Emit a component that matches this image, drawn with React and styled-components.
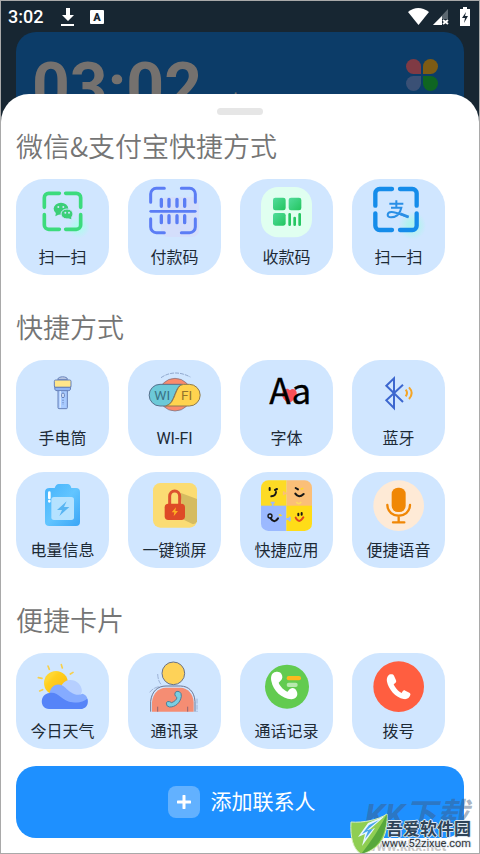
import styled, { createGlobalStyle } from "styled-components";

const GlobalStyle = createGlobalStyle`
  * {
    box-sizing: border-box;
  }
  body {
    margin: 0;
    font-family: Roboto, "Noto Sans CJK SC", sans-serif;
  }
  button {
    font-family: inherit;
  }
`;

const Page = styled.div`
  position: relative;
  display: flex;
  flex-direction: column;
  min-height: 100vh;
  overflow: hidden;
  border: 1px solid #a9a9a9;
  background: #172632;
`;

const StatusBar = styled.header`
  display: flex;
  align-items: center;
  justify-content: space-between;
  height: 31px;
  padding: 0 8px 0 7px;
  color: #fff;
`;

const StatusGroup = styled.div`
  display: flex;
  align-items: center;
  gap: ${(props) => props.$gap}px;
`;

const StatusTime = styled.span`
  font-size: 18px;
  line-height: 20px;
  font-weight: 500;
  margin-right: 3px;
`;

const ClockCard = styled.div`
  display: flex;
  align-items: flex-start;
  justify-content: space-between;
  height: 92px;
  margin: 0 15px;
  padding: 20px 26px 0 16px;
  border-radius: 20px;
  overflow: hidden;
  background: #0c3c68;
  color: #75716e;
`;

const ClockTime = styled.div`
  display: flex;
  align-items: baseline;
  gap: 8px;
  font-size: 66px;
  line-height: 72px;
  font-weight: 700;
  white-space: nowrap;
`;

const ClockPeriod = styled.span`
  font-size: 20px;
  font-weight: 400;
`;

const PetalGrid = styled.div`
  display: grid;
  grid-template-columns: 15px 15px;
  grid-auto-rows: 15px;
  gap: 2px;
  margin-top: 7px;
`;

const Petal = styled.span`
  background: ${(props) => props.$color};
  border-radius: ${(props) => props.$shape};
`;

const Sheet = styled.main`
  flex: 1;
  margin-top: -30px;
  padding: 14px 15px 15px;
  border-radius: 28px 28px 0 0;
  background: #fff;
`;

const Handle = styled.div`
  width: 46px;
  height: 7px;
  margin: 0 auto 13px;
  border-radius: 4px;
  background: #e6e6e6;
`;

const Section = styled.section`
  margin-bottom: ${(props) => (props.$last ? 17 : 34)}px;
`;

const SectionTitle = styled.h2`
  margin: 0 0 15px;
  font-family: "Noto Sans CJK SC", sans-serif;
  font-size: 27px;
  line-height: 36px;
  font-weight: 350;
  color: #757575;
  white-space: nowrap;
`;

const TileGrid = styled.div`
  display: grid;
  grid-template-columns: repeat(4, 1fr);
  gap: 16px 19px;
  padding-right: 19px;
`;

const Tile = styled.button`
  display: flex;
  flex-direction: column;
  align-items: center;
  gap: 8px;
  height: 96px;
  padding: 8px 0 0;
  border: 0;
  border-radius: 28px;
  background: #d0e6ff;
  color: #1d2a36;
  font-size: 16px;
  line-height: 24px;
  white-space: nowrap;
  cursor: pointer;
`;

const TileIcon = styled.svg`
  display: block;
  flex: none;
  width: 51px;
  height: 51px;
  overflow: visible;
`;

const AddButton = styled.button`
  display: flex;
  align-items: center;
  justify-content: center;
  gap: 11px;
  width: 100%;
  height: 72px;
  padding: 0 0 0 3px;
  border: 0;
  border-radius: 20px;
  background: #1e90ff;
  color: #fff;
  font-size: 21px;
  line-height: 30px;
  cursor: pointer;
`;

const PlusBox = styled.span`
  display: flex;
  align-items: center;
  justify-content: center;
  width: 32px;
  height: 32px;
  border-radius: 8px;
  background: #62b1ff;
`;

const Watermark = styled.div`
  position: absolute;
  right: 0;
  bottom: 0;
  width: 130px;
  height: 54px;
  pointer-events: none;
`;

const MarkBack = styled.div`
  position: absolute;
  left: 16px;
  top: 0;
  font-size: 32px;
  line-height: 32px;
  font-weight: 700;
  font-style: italic;
  white-space: nowrap;
  color: rgba(62, 88, 122, 0.45);
`;

const MarkBackUrl = styled.div`
  position: absolute;
  left: 17px;
  bottom: 0;
  font-size: 14px;
  line-height: 14px;
  font-weight: 700;
  white-space: nowrap;
  color: #c9c9c9;
`;

const MarkLeaf = styled.svg`
  position: absolute;
  left: 1px;
  bottom: -1px;
  width: 38px;
  height: 41px;
`;

const MarkText = styled.div`
  position: absolute;
  right: 8px;
  bottom: 3px;
  text-align: right;
  white-space: nowrap;
  color: #2f4458;
  text-shadow: 1px 0 #dfe9f2, -1px 0 #dfe9f2, 0 1px #dfe9f2, 0 -1px #dfe9f2;
`;

const MarkName = styled.div`
  font-size: 17px;
  line-height: 18px;
  font-weight: 700;
`;

const MarkUrl = styled.div`
  font-size: 11px;
  line-height: 12px;
  color: #333;
`;

const HANDSET =
  "M52 40C44 42 40 52 42 62C46 84 68 110 92 114C102 116 110 110 112 102C113 99 112 97 109 95L97 89C94 87 91 88 89 91L86 96C76 92 66 80 62 70L67 66C70 64 70 61 69 58L63 44C61 40 57 39 52 40Z";

function WechatScan() {
  return (
    <>
      <defs>
        <radialGradient id="wechatGlow">
          <stop offset="0.3" stopColor="#b4f8f0" />
          <stop offset="1" stopColor="#b4f8f0" stopOpacity="0" />
        </radialGradient>
      </defs>
      <circle cx="125" cy="120" r="34" fill="url(#wechatGlow)" />
      <g fill="none" stroke="#3cdb7d" strokeWidth="11" strokeLinecap="round">
        <path d="M67 19H35a13 13 0 0 0-13 13V61" />
        <path d="M86 19H118a13 13 0 0 1 13 13V61" />
        <path d="M67 127H35a13 13 0 0 1-13-13V83" />
        <path d="M86 127H118a13 13 0 0 0 13-13V83" />
      </g>
      <g fill="#3ccf78">
        <ellipse cx="72" cy="65" rx="22" ry="18" />
        <path d="M57 76l-2 12 14-7z" />
        <ellipse cx="90" cy="81" rx="18" ry="15" stroke="#d0e6ff" strokeWidth="3" />
        <path d="M92 93l11 4-1-9z" />
      </g>
      <g fill="#d0e6ff">
        <circle cx="64" cy="60" r="3" />
        <circle cx="79" cy="60" r="3" />
        <circle cx="85" cy="77" r="3" />
        <circle cx="96" cy="77" r="3" />
      </g>
    </>
  );
}

function PayCode() {
  return (
    <>
      <rect x="36" y="30" width="114" height="120" rx="20" fill="#d5dcfa" opacity="0.8" />
      <g fill="none" stroke="#5b7df5" strokeWidth="9" strokeLinecap="round">
        <path d="M46 4H22A17 17 0 0 0 5 21V46" />
        <path d="M97 4H122A17 17 0 0 1 139 21V46" />
        <path d="M46 137H22A17 17 0 0 1 5 120V95" />
        <path d="M97 137H122A17 17 0 0 0 139 120V95" />
        <path d="M5 73H139" strokeWidth="8" />
      </g>
      <g stroke="#5b7df5" strokeWidth="10" strokeLinecap="round">
        <path d="M37 37V58M60 37V58M84 37V58M107 37V58" />
        <path d="M37 86V107M60 86V107M84 86V107M107 86V107" />
      </g>
    </>
  );
}

function ReceiveCode() {
  return (
    <>
      <defs>
        <linearGradient id="receiveFill" x1="0" y1="0" x2="1" y2="1">
          <stop offset="0" stopColor="#52dc9c" />
          <stop offset="1" stopColor="#23c55e" />
        </linearGradient>
      </defs>
      <rect width="153" height="151" rx="52" fill="#e0fff0" />
      <g fill="url(#receiveFill)">
        <rect x="36" y="32" width="38" height="38" rx="7" />
        <rect x="83" y="32" width="38" height="38" rx="7" />
        <rect x="36" y="78" width="38" height="38" rx="7" />
      </g>
      <path d="M86 82V113M101 93V113M116 82V113" stroke="#26c763" strokeWidth="8" strokeLinecap="round" />
    </>
  );
}

function AlipayScan() {
  return (
    <>
      <defs>
        <radialGradient id="alipayGlow">
          <stop offset="0.3" stopColor="#b0f3ee" />
          <stop offset="1" stopColor="#b0f3ee" stopOpacity="0" />
        </radialGradient>
      </defs>
      <circle cx="118" cy="116" r="42" fill="url(#alipayGlow)" />
      <g fill="none" stroke="#158cea" strokeWidth="13" strokeLinecap="round">
        <path d="M57 6H20A13 13 0 0 0 7 19V56" />
        <path d="M81 6H118A13 13 0 0 1 131 19V56" />
        <path d="M57 129H20A13 13 0 0 1 7 116V79" />
        <path d="M81 129H118A13 13 0 0 0 131 116V79" />
      </g>
      <g fill="none" stroke="#2a8fe6" strokeWidth="6">
        <path d="M49 50H91M70 40V62M54 62H85C82 76 72 90 54 91C40 91 41 76 55 75C70 74 84 84 106 91" />
        <path d="M82 80L107 90" strokeWidth="8" />
      </g>
    </>
  );
}

function Flashlight() {
  return (
    <g stroke="#6680b8" strokeWidth="3">
      <path d="M62 34C64 24 90 24 92 34Z" fill="#c8d3ea" />
      <path d="M53 56H101L91 68V119Q91 122 88 122H66Q63 122 63 119V68Z" fill="#a9cbff" />
      <rect x="52" y="36" width="50" height="22" rx="4" fill="#ffe68a" />
      <path d="M53 58L54 65Q55 68 60 68H94Q99 68 100 65L101 58Z" fill="#8fb5f5" />
      <path d="M70 69V119" stroke="#d5e6ff" strokeWidth="4" />
      <rect x="74" y="75" width="8" height="14" rx="4" fill="#dbe9ff" />
      <path d="M78 95V110" strokeDasharray="4 3" />
    </g>
  );
}

function WifiBadge() {
  return (
    <>
      <circle cx="78" cy="80" r="49" fill="#fb8a6b" stroke="#6a6f86" strokeWidth="2" />
      <path d="M36 29Q76 2 124 27" fill="none" stroke="#7088b4" strokeWidth="2" strokeDasharray="12 3" />
      <path d="M33 49H100C76 54 78 110 50 114H33A32 32 0 0 1 33 49Z" fill="#6cc9d8" stroke="#58708c" strokeWidth="3" />
      <path d="M121 49H104C76 50 82 108 50 114H121A32 32 0 0 0 121 49Z" fill="#ffd34f" stroke="#8c7a52" strokeWidth="3" />
      <g fontFamily="Roboto, sans-serif" fontSize="41" fontWeight="400">
        <text x="16" y="96" fill="#3a7386">WI</text>
        <text x="96" y="96" fill="#94732c">FI</text>
      </g>
    </>
  );
}

function FontLetters() {
  return (
    <>
      <path d="M85 106C64 95 59 82 66 70C72 60 82 60 87 67C93 60 105 62 107 73C109 86 99 97 85 106Z" fill="#f9505a" />
      <text x="25" y="108" fontFamily="Noto Sans CJK SC, sans-serif" fontSize="105" fontWeight="400" fill="#000" stroke="#000" strokeWidth="1">
        Aa
      </text>
    </>
  );
}

function Bluetooth() {
  return (
    <g fill="none" strokeWidth="6">
      <path d="M90 102L40 53L63 31V120L40 97L90 50" stroke="#3c67cf" />
      <path d="M98 65Q106 75 98 85" stroke="#f4a526" />
      <path d="M108 58Q124 75 108 93" stroke="#f4a526" />
    </g>
  );
}

function BatteryInfo() {
  return (
    <>
      <defs>
        <linearGradient id="batteryFill" x1="0" y1="0" x2="1" y2="1">
          <stop offset="0" stopColor="#45b2fb" />
          <stop offset="0.5" stopColor="#62c5ff" />
          <stop offset="1" stopColor="#3aa5f6" />
        </linearGradient>
      </defs>
      <path
        d="M38 24H53Q57 12 65 12H92Q100 12 103 24H117Q129 24 129 36V126Q129 138 117 138H37Q24 138 24 126V36Q24 24 38 24Z"
        fill="url(#batteryFill)"
      />
      <rect x="43" y="51" width="68" height="69" rx="8" fill="#b5e2ff" />
      <path d="M89 64L60 90H75L67 108L97 81H81Z" fill="#58b5f2" />
      <path d="M37 38V54M37 63V64" stroke="#fff" strokeWidth="8" strokeLinecap="round" />
    </>
  );
}

function LockScreen() {
  return (
    <>
      <rect x="12" y="9" width="132" height="134" rx="22" fill="#fbdc73" />
      <path d="M94 38L144 57V124Q142 131 132 133L104 119Z" fill="#d5bb60" />
      <path d="M62 76V49A15 16 0 0 1 92 49V76" fill="none" stroke="#dc5230" strokeWidth="9" />
      <rect x="47" y="71" width="61" height="49" rx="11" fill="#de4a27" />
      <path d="M81 82L68 97H76L74 109L87 93H79Z" fill="#ffae21" />
    </>
  );
}

function QuickApps() {
  return (
    <>
      <defs>
        <clipPath id="puzzleClip">
          <rect y="1" width="153" height="152" rx="22" />
        </clipPath>
      </defs>
      <g clipPath="url(#puzzleClip)">
        <rect width="77" height="78" fill="#fddb25" />
        <rect x="77" width="77" height="78" fill="#fbbf78" />
        <rect y="77" width="76" height="77" fill="#9bb9ff" />
        <rect x="76" y="77" width="78" height="77" fill="#ffdc18" />
      </g>
      <path d="M35 80V66M29 68H41" stroke="#9bb9ff" strokeWidth="5" />
      <path d="M66 40H78M68 34V46" stroke="#fbbf78" strokeWidth="5" />
      <path d="M76 117H88M86 110V124" stroke="#9bb9ff" strokeWidth="6" />
      <path d="M106 66Q113 76 121 66" fill="none" stroke="#fddb62" strokeWidth="5" />
      <g fill="none" stroke="#171717" strokeWidth="6" strokeLinecap="round">
        <path d="M26 24V30M42 30L48 27M31 49Q44 48 45 36" />
        <path d="M104 24L111 28M103 41Q113 56 128 42" />
        <circle cx="27" cy="108" r="6" strokeWidth="4" />
        <path d="M29 115Q40 132 51 115" />
        <path d="M112 101V106M122 99V104" />
      </g>
      <path d="M104 113Q114 133 127 112" fill="none" stroke="#e0461e" strokeWidth="6" strokeLinecap="round" />
      <path d="M119 28L127 25M54 106Q58 103 61 108" stroke="#fddb25" strokeWidth="5" fill="none" />
    </>
  );
}

function VoiceMic() {
  return (
    <>
      <circle cx="77" cy="77" r="76" fill="#feead6" />
      <rect x="56" y="23" width="42" height="73" rx="19" fill="#f08705" />
      <path d="M43 75C45 118 109 118 111 75M77 108V126M60 127H94" fill="none" stroke="#f08705" strokeWidth="7" strokeLinecap="round" />
    </>
  );
}

function Weather() {
  return (
    <>
      <defs>
        <linearGradient id="sunFill" x1="0" y1="0" x2="1" y2="1">
          <stop offset="0.25" stopColor="#ffd633" />
          <stop offset="0.35" stopColor="#ffcf20" />
          <stop offset="1" stopColor="#fbb80a" />
        </linearGradient>
      </defs>
      <path
        d="M73 11L76 21M33 15L37 25M100 39L108 34M4 50L15 52M8 90L17 86"
        stroke="#f7d04c"
        strokeWidth="5"
        strokeLinecap="round"
      />
      <circle cx="57" cy="66" r="36" fill="url(#sunFill)" />
      <path d="M74 74C83 50 125 50 134 84C137 98 128 108 112 104Z" fill="#b6cfff" />
      <path d="M38 104C36 72 65 60 85 80C98 93 118 108 137 98C150 103 154 114 151 124L44 130Z" fill="#85abff" />
      <path d="M38 96C62 90 76 121 106 124C126 127 141 121 151 113C157 132 145 144 130 144H36C7 144 7 98 38 96Z" fill="#5684f8" />
    </>
  );
}

function Contacts() {
  return (
    <>
      <path d="M5 152V121C8 91 26 75 51 75H95C119 76 136 91 138 121V152" fill="none" stroke="#6b7794" strokeWidth="3" />
      <path d="M9 152V123C12 98 26 81 51 80H94C117 81 132 98 134 123V152Z" fill="#f58d73" />
      <path d="M26 137V152M116 137V152" stroke="#8f6470" strokeWidth="3" />
      <circle cx="73" cy="37" r="34" fill="#fed258" stroke="#68728a" strokeWidth="3" />
      <path d="M26 39Q27 60 36 70M2 94Q12 80 34 76M144 113V153" fill="none" stroke="#8398c2" strokeWidth="2" strokeDasharray="15 3" />
      <path
        d="M79 94Q83 89 91 92Q98 96 97 106C94 126 78 139 61 138Q51 136 52 126Q54 119 62 122L68 125C77 121 83 116 84 110L79 105Q76 100 79 94Z"
        fill="#79cfe3"
        stroke="#517d96"
        strokeWidth="3"
      />
    </>
  );
}

function CallLog() {
  return (
    <>
      <circle cx="78" cy="77" r="66" fill="#62cb50" />
      <path
        d="M44 33C33 35 28 45 31 60C37 90 62 113 91 115C105 115 113 103 107 91C102 79 90 78 82 89L80 92C69 88 57 76 53 65L58 60C65 55 66 46 61 38C57 33 50 31 44 33Z"
        fill="#fff"
      />
      <rect x="77" y="45" width="43" height="13" rx="6" fill="#fcb91e" />
      <rect x="77" y="65" width="33" height="13" rx="6" fill="#b8e9ae" />
    </>
  );
}

function Dial() {
  return (
    <>
      <circle cx="77" cy="77" r="76" fill="#ff5e40" />
      <path d={HANDSET} fill="#fff" />
    </>
  );
}

const sections = [
  {
    title: "微信&支付宝快捷方式",
    tiles: [
      { label: "扫一扫", Icon: WechatScan },
      { label: "付款码", Icon: PayCode },
      { label: "收款码", Icon: ReceiveCode },
      { label: "扫一扫", Icon: AlipayScan },
    ],
  },
  {
    title: "快捷方式",
    tiles: [
      { label: "手电筒", Icon: Flashlight },
      { label: "WI-FI", Icon: WifiBadge },
      { label: "字体", Icon: FontLetters },
      { label: "蓝牙", Icon: Bluetooth },
      { label: "电量信息", Icon: BatteryInfo },
      { label: "一键锁屏", Icon: LockScreen },
      { label: "快捷应用", Icon: QuickApps },
      { label: "便捷语音", Icon: VoiceMic },
    ],
  },
  {
    title: "便捷卡片",
    tiles: [
      { label: "今日天气", Icon: Weather },
      { label: "通讯录", Icon: Contacts },
      { label: "通话记录", Icon: CallLog },
      { label: "拨号", Icon: Dial },
    ],
  },
];

const petals = [
  { color: "#7f3a44", shape: "50% 50% 0 50%" },
  { color: "#7d5b14", shape: "50% 50% 50% 0" },
  { color: "#3a5075", shape: "50% 0 50% 50%" },
  { color: "#0f6522", shape: "0 50% 50% 50%" },
];

function StatusIcons() {
  return (
    <StatusGroup $gap={4}>
      <svg width="21" height="17" viewBox="0 0 21 17">
        <path d="M0 4Q10 -4 21 4L10.500 17Z" fill="#fff" />
      </svg>
      <svg width="16" height="17" viewBox="0 0 16 17">
        <path d="M15 1V17H0Z" fill="#5c6871" />
        <path d="M9 8V17H0Z" fill="#fff" />
        <path d="M9 11H16V17H9Z" fill="#172632" />
        <path d="M10 12L15 16M15 12L10 16" stroke="#fff" strokeWidth="2" />
      </svg>
      <svg width="18" height="19" viewBox="0 0 18 19">
        <path d="M10 0H14V2H17V19H7V2H10Z" fill="#fff" />
        <path d="M13 5L9 11H12L11 16L15 9H12Z" fill="#172632" />
      </svg>
    </StatusGroup>
  );
}

export default function App() {
  return (
    <Page>
      <GlobalStyle />
      <StatusBar>
        <StatusGroup $gap={15}>
          <StatusTime>3:02</StatusTime>
          <svg width="14" height="18" viewBox="0 0 14 18">
            <path d="M5 0H9V7H13L7 13L1 7H5ZM0 16H13V18H0Z" fill="#fff" />
          </svg>
          <svg width="14" height="14" viewBox="0 0 14 14">
            <rect width="14" height="14" rx="1" fill="#fff" />
            <text x="7" y="11" textAnchor="middle" fontFamily="Roboto, sans-serif" fontSize="11" fontWeight="900" fill="#172632">
              A
            </text>
          </svg>
        </StatusGroup>
        <StatusIcons />
      </StatusBar>
      <ClockCard>
        <ClockTime>
          03:02 <ClockPeriod>下午</ClockPeriod>
        </ClockTime>
        <PetalGrid>
          {petals.map((petal) => (
            <Petal key={petal.color} $color={petal.color} $shape={petal.shape} />
          ))}
        </PetalGrid>
      </ClockCard>
      <Sheet>
        <Handle />
        {sections.map(({ title, tiles }, index) => (
          <Section key={title} $last={index === sections.length - 1}>
            <SectionTitle>{title}</SectionTitle>
            <TileGrid>
              {tiles.map(({ label, Icon }, i) => (
                <Tile key={i} type="button">
                  <TileIcon viewBox="0 0 153 153" aria-hidden="true">
                    <Icon />
                  </TileIcon>
                  {label}
                </Tile>
              ))}
            </TileGrid>
          </Section>
        ))}
        <AddButton type="button">
          <PlusBox>
            <svg width="14" height="14" viewBox="0 0 14 14">
              <path d="M7 1V13M1 7H13" stroke="#fff" strokeWidth="3" strokeLinecap="round" />
            </svg>
          </PlusBox>
          添加联系人
        </AddButton>
      </Sheet>
      <Watermark>
        <MarkBack>KK下载</MarkBack>
        <MarkBackUrl>www.kkx.net</MarkBackUrl>
        <MarkLeaf viewBox="0 0 38 41">
          <path d="M37 1C38 20 33 36 11 41C3 36 0 24 1 9C13 10 28 7 37 1Z" fill="#8fce52" stroke="#d8efc0" />
          <path d="M37 1C36 20 31 35 11 41C20 30 28 18 37 1Z" fill="#57a83c" />
          <path d="M35 3L18 10L8 24L15 21L12 33L25 15L18 18Z" fill="#e6f6ff" />
          <path d="M29 7L19 12L12 21L18 18L15 26L23 16L17 17Z" fill="#4aa6ea" />
        </MarkLeaf>
        <MarkText>
          <MarkName>吾爱软件园</MarkName>
          <MarkUrl>www.52zixue.com</MarkUrl>
        </MarkText>
      </Watermark>
    </Page>
  );
}
